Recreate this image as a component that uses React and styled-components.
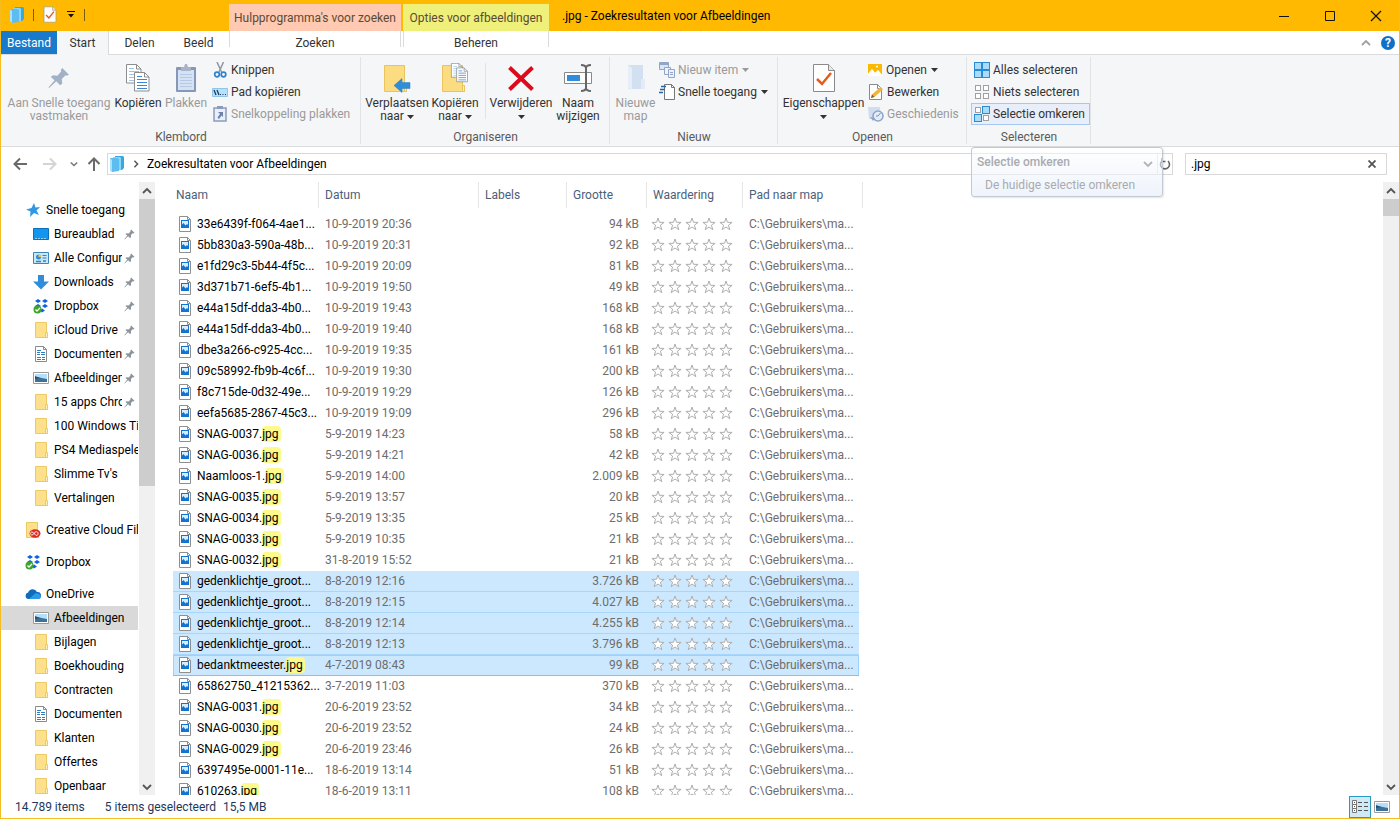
import React from "react";
import styled, { createGlobalStyle, css } from "styled-components";

const GlobalStyle = createGlobalStyle`
  * {
    box-sizing: border-box;
  }

  body {
    margin: 0;
    background: #fff;
    color: #000;
    font-family: Roboto, "Open Sans", sans-serif;
    font-size: 12px;
    line-height: 16px;
  }

  button,
  input {
    font: inherit;
    color: inherit;
  }

  button {
    margin: 0;
    padding: 0;
    border: 0;
    background: none;
    white-space: nowrap;
  }

  svg {
    display: block;
    flex: none;
  }
`;

/* ---------- icons ---------- */

const Svg = ({ w = 16, h = w, box, children }) => (
  <svg
    width={w}
    height={h}
    viewBox={box || `0 0 ${w} ${h}`}
    fill="none"
    aria-hidden="true"
  >
    {children}
  </svg>
);

const ResultsIcon = () => (
  <Svg w={16}>
    <path d="M6 0h8l1 1v11l-2 2H6z" fill="#3ba7e0" />
    <path d="M4 1h7l1 1v12l-8 1z" fill="#8ad6f8" />
    <path d="M1 2h7l2 1v12l-7 1-2-2z" fill="#5dbcf0" />
    <path d="M1 2l2 2v12l-2-2z" fill="#a9e3fb" />
  </Svg>
);

const CheckDocIcon = ({ w = 24, h = 30 }) => (
  <Svg w={w} h={h} box="0 0 24 30">
    <path d="M1.500 1.500h15l6 6v21h-21z" fill="#fff" stroke="#8a8a8a" />
    <path d="M16.500 1.500v6h6" fill="#e8e8e8" stroke="#8a8a8a" />
    <path d="M5 16l5 5 9-11" stroke="#e8591c" strokeWidth="2.500" />
  </Svg>
);

const PinShape = ({ w, color }) => (
  <Svg w={w} box="0 0 20 20">
    <path
      d="M13 1l6 6-2 1-1-.500-3.500 3.500.500 4-2 1.500-3.500-3.500L1 19l-.500-.500L6 12 2.500 9 4.500 7.500l4 .500L12 4l-.500-1z"
      fill={color}
    />
  </Svg>
);

const PageLines = ({ x, y, c = "#3b87d3", s = "#8d8d8d" }) => (
  <g transform={`translate(${x} ${y})`}>
    <path d="M.500.500h10l4.500 4.500v14H.500z" fill="#fff" stroke={s} />
    <path d="M10.500.500V5H15" stroke={s} />
    <path d="M3 4.500h5M3 7.500h10M3 10.500h10M3 13.500h10M3 16.500h10" stroke={c} />
  </g>
);

const CopyIcon = () => (
  <Svg w={26} h={30}>
    <PageLines x={1} y={1} c="#9cc5ee" />
    <PageLines x={9} y={9} />
  </Svg>
);

const PasteIcon = () => (
  <Svg w={22} h={30}>
    <rect x="1" y="4" width="20" height="25" rx="1" fill="#8797b8" />
    <path d="M3 7h16v20H3z" fill="#d5e2f4" />
    <path d="M5 11.500h12M5 14.500h12M5 17.500h12M5 20.500h12M5 23.500h12" stroke="#b5c9e6" />
    <path d="M6 4h3l1-3h2l1 3h3v4H6z" fill="#aab4c8" />
  </Svg>
);

const ScissorsIcon = () => (
  <Svg w={16}>
    <path d="M5 0l4.500 10M11.500 0L7 10" stroke="#8c98a5" strokeWidth="1.500" />
    <circle cx="5" cy="12.500" r="2.300" stroke="#2c83cf" strokeWidth="1.700" />
    <circle cx="11.500" cy="12.500" r="2.300" stroke="#2c83cf" strokeWidth="1.700" />
  </Svg>
);

const PathIcon = () => (
  <Svg w={16}>
    <path d="M.500 4.500h15v8H.500z" fill="#b7e0fa" stroke="#90c4e8" />
    <path d="M2 6l2 5M5 6l2 5" stroke="#173f66" strokeWidth="1.300" />
    <path d="M8 10.500h1M10.500 10.500h1M13 10.500h1" stroke="#173f66" />
  </Svg>
);

const ShortcutPasteIcon = () => (
  <Svg w={16}>
    <path d="M2 2h12v13H2z" fill="#e9eff8" stroke="#8b9cbc" strokeWidth="1.500" />
    <path d="M5 0h6v3H5z" fill="#8b9cbc" />
    <path d="M6 6h5v5L9.500 9.500 7 13 5.500 11.500 8 8z" fill="#6d82a8" />
  </Svg>
);

const FolderBase = ({ x = 0 }) => (
  <g transform={`translate(${x} 0)`}>
    <path d="M.500 2.500h20v20l2 6H.500z" fill="#fbdc80" stroke="#e9c35c" />
    <path d="M20.500 22.500h2v6h-2z" fill="#fff0b0" stroke="#e9c35c" />
  </g>
);

const MoveIcon = () => (
  <Svg w={28} h={30}>
    <FolderBase x={1} />
    <path d="M11 22.500l8-7v4h8v6h-8v4z" fill="#2f8ddc" stroke="#2a7fc9" strokeWidth=".500" />
  </Svg>
);

const CopyToIcon = () => (
  <Svg w={28} h={30}>
    <FolderBase x={1} />
    <g transform="translate(10 0) scale(.750)">
      <PageLines x={0} y={0} c="#9cc5ee" />
      <PageLines x={7} y={6} />
    </g>
  </Svg>
);

const DeleteIcon = () => (
  <Svg w={28} h={30}>
    <path d="M2.500 4.500l23 22M25.500 4.500l-23 22" stroke="#dc0a1b" strokeWidth="4" />
  </Svg>
);

const RenameIcon = () => (
  <Svg w={30} h={30}>
    <path d="M1.500 9.500h27v11h-27z" fill="#fff" stroke="#8a8a8a" />
    <path d="M4 12h13v6H4z" fill="#2f8ddc" />
    <path d="M18 2c3 0 4.500 1 5 2.500.500-1.500 2-2.500 5-2.500M18 28c3 0 4.500-1 5-2.500.500 1.500 2 2.500 5 2.500M23 4v22" stroke="#666" strokeWidth="2" />
  </Svg>
);

const NewFolderIcon = () => (
  <Svg w={22} h={30}>
    <path d="M3 2h15v14l2 2v8H3z" fill="#d3e0f1" />
    <path d="M3 2l4 3v22l-4-2z" fill="#e6eef8" />
    <path d="M16 16h4v10h-4z" fill="#e3ebf6" />
  </Svg>
);

const NewItemIcon = () => (
  <Svg w={16}>
    <path d="M.500.500h9v7h-9z" fill="#dbe6f5" stroke="#90a5c8" />
    <path d="M0 1h10v2H0z" fill="#90a5c8" />
    <path d="M5.500 5.500h6v7h-6z" fill="#eef3fa" stroke="#90a5c8" />
    <path d="M9.500 7.500h6v8h-6z" fill="#eef3fa" stroke="#90a5c8" />
    <path d="M11 10.500h3M11 12.500h3" stroke="#90a5c8" />
  </Svg>
);

const EasyAccessIcon = () => (
  <Svg w={16}>
    <path d="M5.500.500h7l3 3v12h-10z" fill="#fff" stroke="#777" />
    <path d="M12.500.500v3h3" stroke="#777" />
    <path d="M2 2.500h5M1 5.500h5M0 8.500h4" stroke="#2166a8" strokeWidth="1.600" />
  </Svg>
);

const PictureOpenIcon = () => (
  <Svg w={16}>
    <path d="M1 2h14v11l-4-5-3 3-3-4-4 5z" fill="#fbb900" />
    <path d="M1 12l4-5 3 4 3-3 4 5v1H1z" fill="#fff" />
    <circle cx="10" cy="4.500" r="1" fill="#fff" />
  </Svg>
);

const EditIcon = () => (
  <Svg w={16}>
    <path d="M1.500.500h8l4 4v11h-12z" fill="#fff" stroke="#8a8a8a" />
    <path d="M9.500.500v4h4" stroke="#8a8a8a" />
    <path d="M3 14l1-3.500L12.500 3l2.500 2.500L6.500 13z" fill="#f1b53c" />
    <path d="M3 14l1-3.500L6.500 13z" fill="#7a6247" />
  </Svg>
);

const HistoryIcon = () => (
  <Svg w={16}>
    <path d="M0 1h12l1 12H1z" fill="#d2deef" />
    <circle cx="10" cy="10" r="5" fill="#e5edf8" stroke="#8fa6ca" strokeWidth="1.600" />
    <path d="M10 10l2.500-3M10 10H8" stroke="#7890b8" />
    <path d="M2 11l3 4 2-3" fill="#8fa6ca" />
  </Svg>
);

const SelectIcon = ({ on }) => (
  <Svg w={16}>
    {[0, 1, 2, 3].map((i) => {
      const x = (i % 2) * 8;
      const y = i > 1 ? 8 : 0;
      return on[i] ? (
        <rect key={i} x={x + 0.5} y={y + 0.5} width="7" height="7" fill="#a8dcfb" stroke="#2b8ad4" />
      ) : (
        <rect key={i} x={x + 1.5} y={y + 1.5} width="5" height="5" fill="#fff" stroke="#a0a0a0" />
      );
    })}
  </Svg>
);

const StarIcon = () => (
  <Svg w={16}>
    <path d="M9 1l1.500 4.500L15 5l-3.500 3.500L14 13l-5-2-4 4 .500-5.500L1 7.500 6.500 6z" fill="#2f97e4" />
  </Svg>
);

const DesktopIcon = () => (
  <Svg w={16}>
    <path d="M.500 2.500h15v11H.500z" fill="#1495ee" stroke="#0a6fbd" />
    <path d="M2 12.500h12" stroke="#8fd0f9" strokeDasharray="2 1" />
  </Svg>
);

const ConfigIcon = () => (
  <Svg w={16}>
    <path d="M.500 2.500h15v11H.500z" fill="#c7e7fa" stroke="#3f86b8" />
    <circle cx="5.500" cy="7" r="2.500" fill="#2f8ddc" />
    <path d="M5.500 7V4.500A2.500 2.500 0 0 1 8 7z" fill="#f2c44e" />
    <path d="M9.500 5.500h4M9.500 8h4" stroke="#3f7fb3" />
    <path d="M3 11.500h5M10 11h3" stroke="#3f7fb3" strokeWidth="1.500" />
  </Svg>
);

const DownloadIcon = () => (
  <Svg w={16}>
    <path d="M5 1h6v6.500h5L8 15.500 0 7.500h5z" fill="#2f8ddc" />
  </Svg>
);

const DropboxIcon = () => (
  <Svg w={16}>
    <path
      d="M5 1l3 2-3 2-3-2zM12 1l3 2-3 2-3-2zM5 6l3 2-3 2-3-2zM12 6l3 2-3 2-3-2zM9 10.500l3 2-3 2-2-2z"
      fill="#0d63e0"
    />
    <circle cx="4.500" cy="11.500" r="4" fill="#3ea52c" />
    <path d="M2.500 11.500L4 13l3-3" stroke="#fff" strokeWidth="1.300" />
  </Svg>
);

const FolderIcon = () => (
  <Svg w={16}>
    <path d="M2.500.500h11v10l1 5h-12z" fill="#fce08b" stroke="#ecc965" />
    <path d="M12.500 10.500h2v5h-2z" fill="#fff1b8" stroke="#ecc965" />
  </Svg>
);

const CreativeIcon = () => (
  <Svg w={16}>
    <path d="M1.500.500h11v12l1 3h-12z" fill="#fce08b" stroke="#ecc965" />
    <ellipse cx="10" cy="11.500" rx="5.500" ry="4.200" fill="#da2d20" />
    <path d="M12 13.500c-2 .500-3-3.500-5-3.500s-2 3 0 3 2-3 4-3.300 3 2.500 1 3.800z" stroke="#fff" strokeWidth=".900" />
  </Svg>
);

const OneDriveIcon = () => (
  <Svg w={16}>
    <path d="M3.500 13a3.300 3.300 0 0 1-.300-6.500A4.800 4.800 0 0 1 12 6a3.500 3.500 0 0 1 1 7z" fill="#0f6cbd" />
    <path d="M4 13l6-5.500c3-1 5.500.500 6 3 0 1.500-1.500 2.500-3 2.500z" fill="#2b9be8" />
  </Svg>
);

const DocumentIcon = () => (
  <Svg w={16}>
    <path d="M2.500.500h8l3 3v12h-11z" fill="#fff" stroke="#8a8a8a" />
    <path d="M10.500.500v3h3" stroke="#8a8a8a" />
    <path d="M4 4.500h4M4 6.500h3M8 6.500h4M4 8.500h3M8 8.500h4M4 11.500h4M9 11.500h3M4 13.500h4M9 13.500h3" stroke="#2f7fc0" />
  </Svg>
);

const ImagesIcon = () => (
  <Svg w={16}>
    <path d="M.500 2.500h15v11H.500z" fill="#fff" stroke="#9a9a9a" />
    <path d="M2 4h12v8H2z" fill="#b5def7" />
    <path d="M2 8c3-2 6 0 12 1v3H2z" fill="#3c7199" />
    <path d="M2 6l5 2-5 1z" fill="#234e7a" />
  </Svg>
);

const FileIcon = () => (
  <Svg w={12} h={16}>
    <path d="M.500.500h8l3 3v12H.500z" fill="#fff" stroke="#8f8f8f" />
    <path d="M8.500.500v3h3" stroke="#8f8f8f" />
    <path d="M2 4h8v8H2z" fill="#1374cf" />
    <path d="M3 5h6v4L8 8 6.500 9.500 4.500 7 3 8.500z" fill="#d8edfc" />
  </Svg>
);

const RateStar = () => (
  <Svg w={14} box="0 0 14 14">
    <path
      d="M7 1l1.500 4.300 4.600.100-3.700 2.800 1.400 4.500L7 10l-3.800 2.700 1.400-4.500L.900 5.400l4.600-.100z"
      fill="#fff"
      stroke="#aeaeae"
    />
  </Svg>
);

const Arrow = ({ d, color = "#6a6a6a" }) => (
  <Svg w={14}>
    <path d={d} stroke={color} strokeWidth="2" />
  </Svg>
);

const Chevron = ({ dir = "down", color = "#555", size = 10 }) => {
  const paths = {
    down: "M1 3l4 4 4-4",
    up: "M1 7l4-4 4 4",
    right: "M3 1l4 4-4 4",
  };
  return (
    <Svg w={size} box="0 0 10 10">
      <path d={paths[dir]} stroke={color} strokeWidth="1.800" />
    </Svg>
  );
};

const Caret = () => (
  <Svg w={7} h={4}>
    <path d="M0 0h7L3.500 4z" fill="currentColor" />
  </Svg>
);

/* ---------- data ---------- */

const sidebarItems = [
  { icon: StarIcon, label: "Snelle toegang", root: true },
  { icon: DesktopIcon, label: "Bureaublad", pinned: true },
  { icon: ConfigIcon, label: "Alle Configuratie", pinned: true },
  { icon: DownloadIcon, label: "Downloads", pinned: true },
  { icon: DropboxIcon, label: "Dropbox", pinned: true },
  { icon: FolderIcon, label: "iCloud Drive", pinned: true },
  { icon: DocumentIcon, label: "Documenten", pinned: true },
  { icon: ImagesIcon, label: "Afbeeldingen", pinned: true },
  { icon: FolderIcon, label: "15 apps Chrome", pinned: true },
  { icon: FolderIcon, label: "100 Windows Tips" },
  { icon: FolderIcon, label: "PS4 Mediaspeler" },
  { icon: FolderIcon, label: "Slimme Tv's" },
  { icon: FolderIcon, label: "Vertalingen" },
  { icon: CreativeIcon, label: "Creative Cloud Files", root: true, gap: true },
  { icon: DropboxIcon, label: "Dropbox", root: true, gap: true },
  { icon: OneDriveIcon, label: "OneDrive", root: true, gap: true },
  { icon: ImagesIcon, label: "Afbeeldingen", active: true },
  { icon: FolderIcon, label: "Bijlagen" },
  { icon: FolderIcon, label: "Boekhouding" },
  { icon: FolderIcon, label: "Contracten" },
  { icon: DocumentIcon, label: "Documenten" },
  { icon: FolderIcon, label: "Klanten" },
  { icon: FolderIcon, label: "Offertes" },
  { icon: FolderIcon, label: "Openbaar" },
];

const files = [
  ["33e6439f-f064-4ae1...", "10-9-2019 20:36", "94 kB"],
  ["5bb830a3-590a-48b...", "10-9-2019 20:31", "92 kB"],
  ["e1fd29c3-5b44-4f5c...", "10-9-2019 20:09", "81 kB"],
  ["3d371b71-6ef5-4b1...", "10-9-2019 19:50", "49 kB"],
  ["e44a15df-dda3-4b0...", "10-9-2019 19:43", "168 kB"],
  ["e44a15df-dda3-4b0...", "10-9-2019 19:40", "168 kB"],
  ["dbe3a266-c925-4cc...", "10-9-2019 19:35", "161 kB"],
  ["09c58992-fb9b-4c6f...", "10-9-2019 19:30", "200 kB"],
  ["f8c715de-0d32-49e...", "10-9-2019 19:29", "126 kB"],
  ["eefa5685-2867-45c3...", "10-9-2019 19:09", "296 kB"],
  ["SNAG-0037.jpg", "5-9-2019 14:23", "58 kB"],
  ["SNAG-0036.jpg", "5-9-2019 14:21", "42 kB"],
  ["Naamloos-1.jpg", "5-9-2019 14:00", "2.009 kB"],
  ["SNAG-0035.jpg", "5-9-2019 13:57", "20 kB"],
  ["SNAG-0034.jpg", "5-9-2019 13:35", "25 kB"],
  ["SNAG-0033.jpg", "5-9-2019 10:35", "21 kB"],
  ["SNAG-0032.jpg", "31-8-2019 15:52", "21 kB"],
  ["gedenklichtje_groot...", "8-8-2019 12:16", "3.726 kB", true],
  ["gedenklichtje_groot...", "8-8-2019 12:15", "4.027 kB", true],
  ["gedenklichtje_groot...", "8-8-2019 12:14", "4.255 kB", true],
  ["gedenklichtje_groot...", "8-8-2019 12:13", "3.796 kB", true],
  ["bedanktmeester.jpg", "4-7-2019 08:43", "99 kB", true, true],
  ["65862750_41215362...", "3-7-2019 11:03", "370 kB"],
  ["SNAG-0031.jpg", "20-6-2019 23:52", "34 kB"],
  ["SNAG-0030.jpg", "20-6-2019 23:52", "24 kB"],
  ["SNAG-0029.jpg", "20-6-2019 23:46", "26 kB"],
  ["6397495e-0001-11e...", "18-6-2019 13:14", "51 kB"],
  ["610263.jpg", "18-6-2019 13:11", "108 kB"],
];

const columns = [
  ["Naam", 146],
  ["Datum", 160],
  ["Labels", 88],
  ["Grootte", 80],
  ["Waardering", 96],
  ["Pad naar map", 116],
];

/* ---------- small building blocks ---------- */

const Big = ({ icon, lines, width, disabled, caret }) => (
  <BigButton $width={width} disabled={disabled}>
    <BigIcon>{icon}</BigIcon>
    {lines.map((line, i) => (
      <BigLine key={line}>
        {line}
        {caret && i === 1 && <Caret />}
      </BigLine>
    ))}
    {caret && lines.length === 1 && (
      <BigLine>
        <Caret />
      </BigLine>
    )}
  </BigButton>
);

const Small = ({ icon, label, disabled, caret, active }) => (
  <SmallButton disabled={disabled} $active={active}>
    {icon}
    {label}
    {caret && <Caret />}
  </SmallButton>
);

const FileName = ({ name }) => {
  if (!name.endsWith(".jpg")) return <span>{name}</span>;
  return (
    <span>
      {name.slice(0, -3)}
      <Mark>jpg</Mark>
    </span>
  );
};

const ScrollBar = ({ thumb, label }) => (
  <Scroll>
    <ScrollButton aria-label={`${label} omhoog`}>
      <Chevron dir="up" />
    </ScrollButton>
    <Thumb $height={thumb} />
    <Spacer />
    <ScrollButton aria-label={`${label} omlaag`}>
      <Chevron />
    </ScrollButton>
  </Scroll>
);

function App() {
  return (
    <Window>
      <GlobalStyle />

      <TitleBar>
        <QuickAccess>
          <ResultsIcon />
          <QuickLine />
          <QuickButton aria-label="Eigenschappen">
            <CheckDocIcon w={14} h={17} />
          </QuickButton>
          <QuickButton aria-label="Werkbalk aanpassen">
            <Svg w={8} h={7}>
              <path d="M0 .500h8" stroke="#111" />
              <path d="M1 3h6L4 6.500z" fill="#111" />
            </Svg>
          </QuickButton>
          <QuickLine />
        </QuickAccess>
        <Context $bg="#ffc9b2" $width={172}>
          Hulpprogramma's voor zoeken
        </Context>
        <Context $bg="#eef07a" $width={146}>
          Opties voor afbeeldingen
        </Context>
        <Title>.jpg - Zoekresultaten voor Afbeeldingen</Title>
        <Spacer />
        <CaptionButton aria-label="Minimaliseren">
          <Svg w={12}>
            <path d="M1 6.500h10" stroke="#111" />
          </Svg>
        </CaptionButton>
        <CaptionButton aria-label="Maximaliseren">
          <Svg w={12}>
            <path d="M1.500 1.500h9v9h-9z" stroke="#111" />
          </Svg>
        </CaptionButton>
        <CaptionButton aria-label="Sluiten">
          <Svg w={12}>
            <path d="M1 1l10 10M11 1L1 11" stroke="#111" strokeWidth="1.200" />
          </Svg>
        </CaptionButton>
      </TitleBar>

      <TabRow>
        <FileTab>Bestand</FileTab>
        <StartTab>Start</StartTab>
        <Tab $width={61}>Delen</Tab>
        <Tab $width={57}>Beeld</Tab>
        <TabGap />
        <ContextTab $width={172}>Zoeken</ContextTab>
        <ContextTab $width={146}>Beheren</ContextTab>
        <Spacer />
        <HelpArea>
          <button aria-label="Lint minimaliseren">
            <Chevron dir="up" color="#a0a0a0" />
          </button>
          <HelpButton aria-label="Help">?</HelpButton>
        </HelpArea>
      </TabRow>

      <Ribbon>
        <Group $width={360}>
          <GroupBody>
            <Big
              icon={<PinShape w={22} color="#a3b1c6" />}
              lines={["Aan Snelle toegang", "vastmaken"]}
              width={108}
              disabled
            />
            <Big icon={<CopyIcon />} lines={["Kopiëren"]} width={50} />
            <Big icon={<PasteIcon />} lines={["Plakken"]} width={46} disabled />
            <SmallColumn>
              <Small icon={<ScissorsIcon />} label="Knippen" />
              <Small icon={<PathIcon />} label="Pad kopiëren" />
              <Small icon={<ShortcutPasteIcon />} label="Snelkoppeling plakken" disabled />
            </SmallColumn>
          </GroupBody>
          <GroupLabel>Klembord</GroupLabel>
        </Group>

        <Group $width={249}>
          <GroupBody>
            <Big icon={<MoveIcon />} lines={["Verplaatsen", "naar"]} width={64} caret />
            <Big icon={<CopyToIcon />} lines={["Kopiëren", "naar"]} width={52} caret />
            <InnerLine />
            <Big icon={<DeleteIcon />} lines={["Verwijderen"]} width={64} caret />
            <Big icon={<RenameIcon />} lines={["Naam", "wijzigen"]} width={50} />
          </GroupBody>
          <GroupLabel>Organiseren</GroupLabel>
        </Group>

        <Group $width={168}>
          <GroupBody>
            <Big icon={<NewFolderIcon />} lines={["Nieuwe", "map"]} width={43} disabled />
            <SmallColumn>
              <Small icon={<NewItemIcon />} label="Nieuw item" disabled caret />
              <Small icon={<EasyAccessIcon />} label="Snelle toegang" caret />
            </SmallColumn>
          </GroupBody>
          <GroupLabel>Nieuw</GroupLabel>
        </Group>

        <Group $width={189}>
          <GroupBody>
            <Big icon={<CheckDocIcon />} lines={["Eigenschappen"]} width={83} caret />
            <SmallColumn>
              <Small icon={<PictureOpenIcon />} label="Openen" caret />
              <Small icon={<EditIcon />} label="Bewerken" />
              <Small icon={<HistoryIcon />} label="Geschiedenis" disabled />
            </SmallColumn>
          </GroupBody>
          <GroupLabel>Openen</GroupLabel>
        </Group>

        <Group $width={124}>
          <GroupBody>
            <SmallColumn>
              <Small icon={<SelectIcon on={[1, 1, 1, 1]} />} label="Alles selecteren" />
              <Small icon={<SelectIcon on={[0, 0, 0, 0]} />} label="Niets selecteren" />
              <Small icon={<SelectIcon on={[0, 1, 1, 0]} />} label="Selectie omkeren" active />
            </SmallColumn>
          </GroupBody>
          <GroupLabel>Selecteren</GroupLabel>
          <Tooltip role="tooltip">
            <strong>Selectie omkeren</strong>
            <p>De huidige selectie omkeren</p>
          </Tooltip>
        </Group>
      </Ribbon>

      <AddressRow>
        <NavButton $width={26} aria-label="Terug">
          <Arrow d="M14 7H2M7 1.500L1.500 7 7 12.500" />
        </NavButton>
        <NavButton $width={34} aria-label="Vooruit" disabled>
          <Arrow d="M0 7h12M7 1.500L12.500 7 7 12.500" color="#d4d4d4" />
        </NavButton>
        <NavButton $width={14} aria-label="Recente locaties">
          <Chevron size={8} color="#777" />
        </NavButton>
        <NavButton $width={26} aria-label="Omhoog">
          <Arrow d="M7 14V2M1.500 7L7 1.500 12.500 7" />
        </NavButton>
        <AddressBox>
          <ResultsIcon />
          <Chevron dir="right" size={8} />
          <span>Zoekresultaten voor Afbeeldingen</span>
          <Spacer />
          <AddressEnd>
            <button aria-label="Vorige locaties">
              <Chevron color="#666" />
            </button>
            <RefreshButton aria-label="Vernieuwen">
              <Svg w={12}>
                <path d="M9 3a4.500 4.500 0 1 1-6 0M3 0v3.500h3.500" stroke="#666" strokeWidth="1.600" />
              </Svg>
            </RefreshButton>
          </AddressEnd>
        </AddressBox>
        <SearchBox>
          <input type="text" defaultValue=".jpg" aria-label="Zoeken" />
          <button aria-label="Zoekopdracht wissen">
            <Svg w={8}>
              <path d="M.500.500l7 7M7.500.500l-7 7" stroke="#555" strokeWidth="1.800" />
            </Svg>
          </button>
        </SearchBox>
      </AddressRow>

      <Body>
        <Sidebar>
          {sidebarItems.map(({ icon: Icon, label, root, gap, pinned, active }) => (
            <SideLink
              key={`${label}-${active || root || pinned || false}`}
              href="#"
              $root={root}
              $gap={gap}
              $active={active}
            >
              <Icon />
              <SideText>{label}</SideText>
              {pinned && <PinShape w={11} color="#8c959f" />}
            </SideLink>
          ))}
        </Sidebar>
        <ScrollBar thumb={287} label="Mappen" />

        <FileArea>
          <Table>
            <colgroup>
              {columns.map(([name, width]) => (
                <Col key={name} $width={width} />
              ))}
            </colgroup>
            <thead>
              <tr>
                {columns.map(([name]) => (
                  <HeadCell key={name} scope="col">
                    {name}
                  </HeadCell>
                ))}
              </tr>
            </thead>
            <tbody>
              {files.map(([name, date, size, selected, focused], i) => (
                <Row key={i} $selected={selected} $focused={focused}>
                  <Cell>
                    <NameBox>
                      <FileIcon />
                      <FileName name={name} />
                    </NameBox>
                  </Cell>
                  <Cell>{date}</Cell>
                  <Cell />
                  <SizeCell>{size}</SizeCell>
                  <RatingCell>
                    <Stars role="img" aria-label="Geen waardering">
                      <RateStar />
                      <RateStar />
                      <RateStar />
                      <RateStar />
                      <RateStar />
                    </Stars>
                  </RatingCell>
                  <Cell>C:\Gebruikers\ma...</Cell>
                </Row>
              ))}
            </tbody>
          </Table>
        </FileArea>
        <ScrollBar thumb={17} label="Bestanden" />
      </Body>

      <StatusBar>
        <span>14.789 items</span>
        <Selection>
          <span>5 items geselecteerd</span>
          <span>15,5 MB</span>
        </Selection>
        <Spacer />
        <ViewButtons>
          <ViewButton $active aria-label="Details">
            <Svg w={16} h={14}>
              <path d="M.500.500h4v4h-4zM.500 4.500h4v4h-4zM.500 8.500h4v4h-4z" fill="#fff" stroke="#777" />
              <path d="M2 2.500h1M2 6.500h1M2 10.500h1M6 2.500h4M12 2.500h4M6 6.500h4M12 6.500h4M6 10.500h4M12 10.500h4" stroke="#555" />
            </Svg>
          </ViewButton>
          <ViewButton aria-label="Grote pictogrammen">
            <ImagesIcon />
          </ViewButton>
        </ViewButtons>
      </StatusBar>
    </Window>
  );
}

export default App;

/* ---------- styles ---------- */

const Window = styled.div`
  display: flex;
  flex-direction: column;
  height: 100vh;
  overflow: hidden;
  border: 1px solid #f5bd1f;
  border-top: 0;
`;

const Spacer = styled.div`
  flex: 1;
`;

const TitleBar = styled.header`
  display: flex;
  height: 31px;
  flex: none;
  background: #ffb900;
`;

const QuickAccess = styled.div`
  display: flex;
  align-items: center;
  gap: 8px;
  width: 228px;
  padding: 0 0 2px 8px;
`;

const QuickLine = styled.span`
  width: 1px;
  height: 12px;
  background: #7a5c10;
`;

const QuickButton = styled.button`
  display: flex;
  padding: 0 1px;
`;

const Context = styled.div`
  width: ${(props) => props.$width}px;
  margin: 4px 2px 0 0;
  padding-top: 6px;
  background: ${(props) => props.$bg};
  color: #5a4a35;
  text-align: center;
  white-space: nowrap;
`;

const Title = styled.div`
  padding: 8px 0 0 11px;
  white-space: nowrap;
`;

const CaptionButton = styled.button`
  display: flex;
  align-items: center;
  justify-content: center;
  width: 46px;
`;

const TabRow = styled.nav`
  display: flex;
  height: 24px;
  flex: none;
  border-bottom: 1px solid #dadbdc;
`;

const Tab = styled.button`
  width: ${(props) => props.$width}px;
  color: #333;
`;

const TabGap = styled.span`
  width: 2px;
`;

const FileTab = styled(Tab).attrs({ $width: 56 })`
  background: #1979ca;
  color: #fff;
`;

const StartTab = styled(Tab).attrs({ $width: 52 })`
  margin-bottom: -1px;
  border-right: 1px solid #dadbdc;
  background: #f5f6f7;
`;

const ContextTab = styled(Tab)`
  margin: 0 2px 0 0;
  border: solid #dadbdc;
  border-width: 0 1px;
  border-image: linear-gradient(#dadbdc 16px, transparent 16px) 1;
`;

const HelpArea = styled.div`
  display: flex;
  align-items: center;
  gap: 10px;
  padding-right: 4px;
`;

const HelpButton = styled.button`
  width: 14px;
  height: 14px;
  border-radius: 50%;
  background: #0f70c8;
  color: #fff;
  font-weight: 700;
  line-height: 14px;
`;

const Ribbon = styled.section`
  display: flex;
  height: 92px;
  flex: none;
  border-bottom: 1px solid #dadbdc;
  background: #f5f6f7;
`;

const Group = styled.div`
  position: relative;
  display: flex;
  flex-direction: column;
  width: ${(props) => props.$width}px;
  flex: none;
  padding-top: 4px;

  &::after {
    content: "";
    position: absolute;
    top: 2px;
    right: 0;
    bottom: 2px;
    width: 1px;
    background: #e2e3e4;
  }
`;

const GroupBody = styled.div`
  display: flex;
  height: 70px;
  padding-left: 4px;
`;

const GroupLabel = styled.div`
  color: #5a5a5a;
  text-align: center;
`;

const BigButton = styled.button`
  display: flex;
  flex-direction: column;
  align-items: center;
  width: ${(props) => props.$width}px;
  flex: none;
  color: #333;

  &:disabled {
    color: #9a9a9a;
  }
`;

const BigIcon = styled.span`
  display: flex;
  align-items: center;
  height: 38px;
`;

const BigLine = styled.span`
  display: flex;
  align-items: center;
  gap: 3px;
  height: 13px;
  line-height: 13px;
`;

const InnerLine = styled.span`
  width: 1px;
  height: 56px;
  margin: 4px 3px 0 4px;
  background: #e2e3e4;
`;

const SmallColumn = styled.div`
  display: flex;
  flex-direction: column;
`;

const SmallButton = styled.button`
  display: flex;
  align-items: center;
  gap: 3px;
  height: 22px;
  padding: 0 4px 0 1px;
  border: 1px solid transparent;
  color: #333;

  svg:last-child {
    margin-left: 1px;
  }

  &:disabled {
    color: #9a9a9a;
  }

  ${(props) =>
    props.$active &&
    css`
      border-color: #a6c8f0;
      background: #e8effa;
    `}
`;

const Tooltip = styled.div`
  position: absolute;
  z-index: 2;
  top: 92px;
  left: 4px;
  width: 192px;
  height: 50px;
  padding: 6px 5px;
  border: 1px solid #c3c9d3;
  border-radius: 3px;
  background: linear-gradient(rgba(255, 255, 255, 0.5), rgba(228, 236, 248, 0.6));
  box-shadow: 1px 1px 2px rgba(0, 0, 0, 0.1);
  color: #a9abb0;
  white-space: nowrap;

  strong {
    display: block;
    font-weight: 500;
  }

  p {
    margin: 7px 0 0 8px;
  }
`;

const AddressRow = styled.div`
  display: flex;
  align-items: center;
  height: 35px;
  flex: none;
  padding: 0 12px 1px 6px;
`;

const NavButton = styled.button`
  display: flex;
  align-items: center;
  justify-content: center;
  width: ${(props) => props.$width}px;
  height: 22px;
`;

const AddressBox = styled.div`
  display: flex;
  align-items: center;
  gap: 7px;
  flex: 1;
  height: 22px;
  padding-left: 1px;
  border: 1px solid #d9d9d9;
`;

const AddressEnd = styled.div`
  display: flex;
  height: 20px;
  gap: 4px;
`;

const RefreshButton = styled.button`
  padding: 0 1px;
  border-left: 1px solid #e3e3e3;
`;

const SearchBox = styled.div`
  display: flex;
  align-items: center;
  width: 202px;
  height: 22px;
  margin-left: 12px;
  padding: 0 10px 0 5px;
  border: 1px solid #d9d9d9;

  input {
    flex: 1;
    min-width: 0;
    padding: 0;
    border: 0;
    outline: 0;
    background: none;
  }
`;

const Body = styled.main`
  display: flex;
  flex: 1;
  min-height: 0;
`;

const Sidebar = styled.nav`
  width: 138px;
  flex: none;
  padding-top: 16px;
  overflow: hidden;
`;

const SideLink = styled.a`
  display: flex;
  align-items: center;
  gap: 5px;
  width: 137px;
  height: 24px;
  margin-top: ${(props) => (props.$gap ? 8 : 0)}px;
  padding-left: ${(props) => (props.$root ? 24 : 32)}px;
  background: ${(props) => (props.$active ? "#d9d9d9" : "transparent")};
  color: #000;
  text-decoration: none;

  svg:last-child {
    margin: 0 3px 0 -3px;
  }
`;

const SideText = styled.span`
  flex: 1;
  overflow: hidden;
  white-space: nowrap;
`;

const Scroll = styled.div`
  display: flex;
  flex-direction: column;
  width: 16px;
  flex: none;
  background: #f0f0f0;
`;

const ScrollButton = styled.button`
  display: flex;
  align-items: center;
  justify-content: center;
  height: 17px;
`;

const Thumb = styled.div`
  height: ${(props) => props.$height}px;
  background: #cdcdcd;
`;

const FileArea = styled.section`
  flex: 1;
  min-width: 0;
  padding-left: 18px;
  overflow: hidden;
`;

const Table = styled.table`
  width: 686px;
  table-layout: fixed;
  border-spacing: 0;

  thead::after {
    content: "";
    display: block;
    height: 6px;
  }
`;

const Col = styled.col`
  width: ${(props) => props.$width}px;
`;

const HeadCell = styled.th`
  position: relative;
  height: 26px;
  padding: 0 0 0 6px;
  color: #4c607a;
  font-weight: 400;
  text-align: left;

  &:first-child {
    padding-left: 3px;
  }

  &::after {
    content: "";
    position: absolute;
    top: 0;
    right: 0;
    bottom: 0;
    width: 1px;
    background: #e5e5e5;
  }

  &:last-child::after {
    right: -4px;
  }
`;

const Cell = styled.td`
  height: 21px;
  padding: 0 0 0 6px;
  border: solid transparent;
  border-width: 0 0 1px;
  color: #6d6d6d;
  white-space: nowrap;
`;

const SizeCell = styled(Cell)`
  padding-right: 8px;
  text-align: right;
`;

const RatingCell = styled(Cell)`
  padding-left: 4px;
`;

const Row = styled.tr`
  ${(props) =>
    props.$selected &&
    css`
      background: #cce8ff;

      ${Cell}, ${SizeCell}, ${RatingCell} {
        border-bottom-color: ${props.$focused ? "#7fc0f5" : "#a8d5fa"};
      }
    `}

  ${(props) =>
    props.$focused &&
    css`
      box-shadow: inset 0 0 0 1px #99d1ff;
    `}
`;

const NameBox = styled.div`
  display: flex;
  align-items: center;
  gap: 6px;
  color: #000;
`;

const Mark = styled.mark`
  padding: 1px 2px 1px 0;
  border-radius: 4px;
  background: #fdf98a;
`;

const Stars = styled.div`
  display: flex;
  gap: 3px;
`;

const StatusBar = styled.footer`
  display: flex;
  align-items: center;
  gap: 20px;
  height: 23px;
  flex: none;
  padding: 0 6px 0 14px;
  color: #1e395b;
`;

const Selection = styled.div`
  display: flex;
  gap: 7px;
`;

const ViewButtons = styled.div`
  display: flex;
`;

const ViewButton = styled.button`
  display: flex;
  align-items: center;
  justify-content: center;
  width: 22px;
  height: 22px;
  border: 1px solid ${(props) => (props.$active ? "#2a9ac4" : "transparent")};
  background: ${(props) => (props.$active ? "#cfe9f5" : "transparent")};
`;
